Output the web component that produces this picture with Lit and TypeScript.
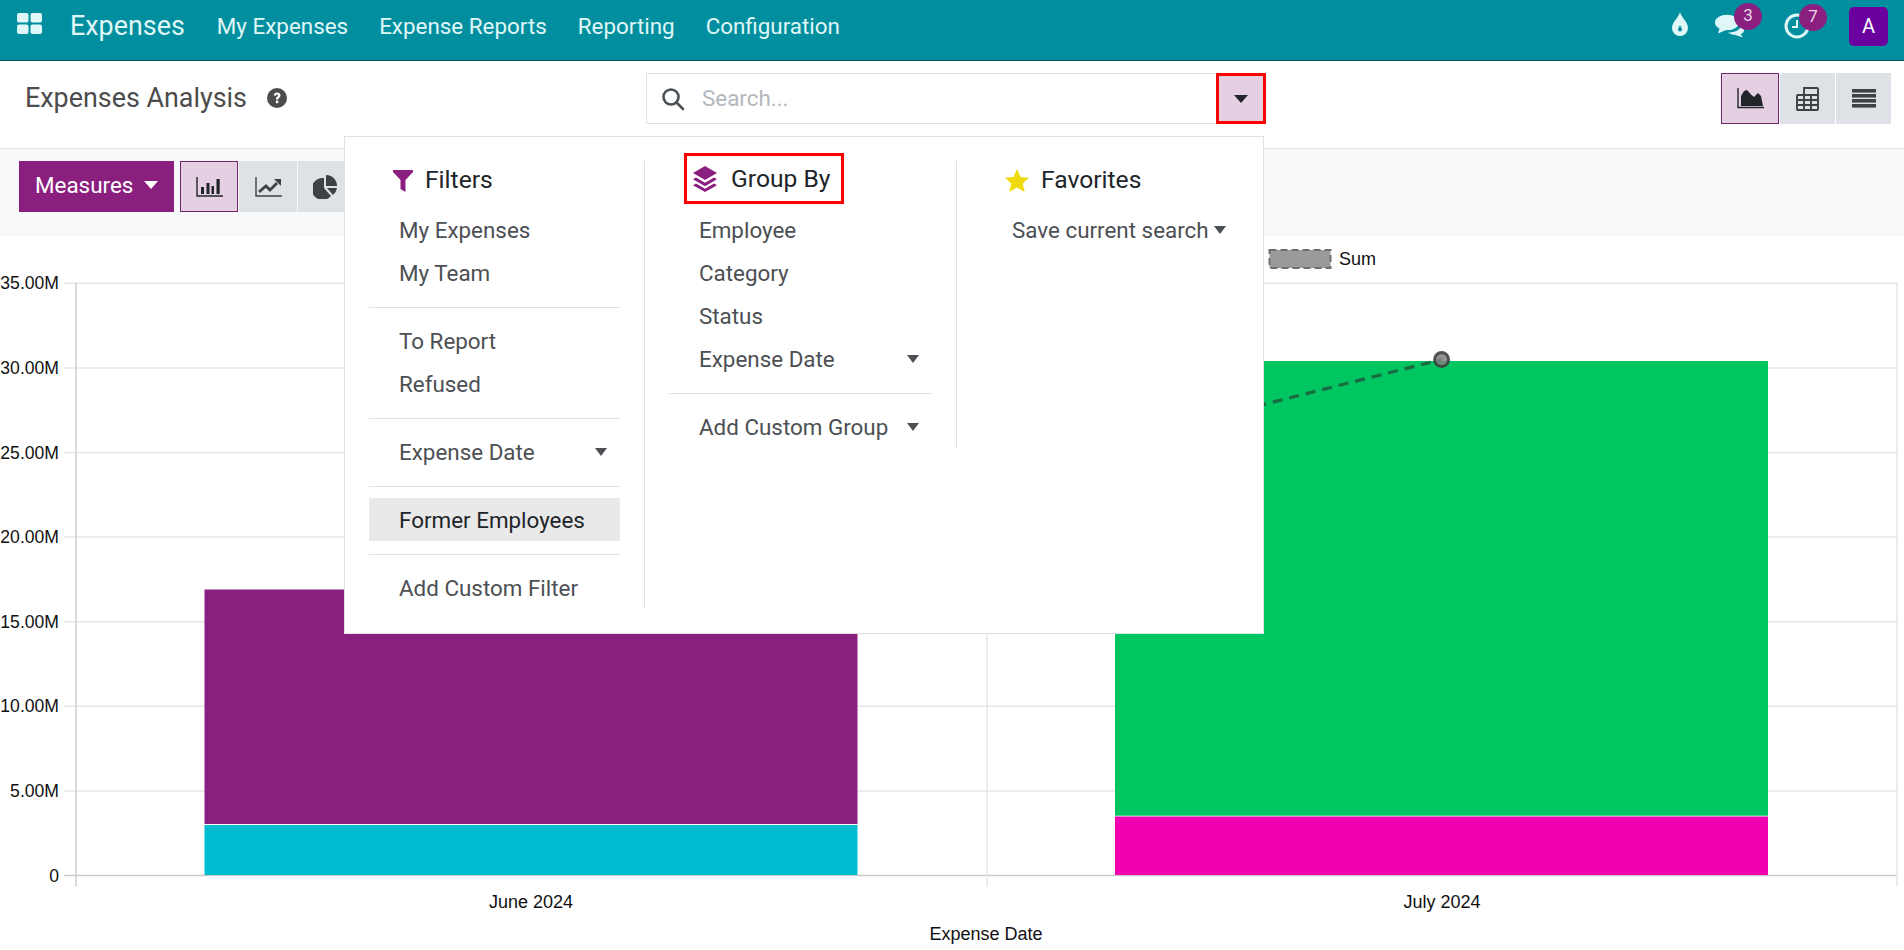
import { LitElement, html, css, svg } from "lit";
import { customElement } from "lit/decorators.js";

const caret = (cls = "") => html`<svg class="caret ${cls}" viewBox="0 0 12 7" preserveAspectRatio="none"><path d="M0 0h12L6 7z" fill="currentColor"/></svg>`;

@customElement("app-root")
export class AppRoot extends LitElement {
  static styles = css`
    :host { display: block; position: relative; width: 1904px; height: 950px; overflow: hidden; background: #fff;
      font-family: Roboto, "Noto Sans", sans-serif; color: #4c4c4c; display: flex; flex-direction: column; }
    .nav { flex: none; background: #018f9f; border-bottom: 1px solid #00525c; color: #e0f7f7;
      display: flex; align-items: center; font-size: 22.4px; padding-bottom: 8px; height: 52px; }
    .apps { width: 25px; height: 21px; margin: 0 0 5px 17px; flex: none; }
    .brand { font-size: 26.88px; margin-left: 28px; margin-right: 32px; }
    .menu { display: flex; gap: 31px; }
    .sys { margin-left: auto; display: flex; align-items: center; padding-right: 16px; position: relative; height: 100%; }
    .ico { flex: none; display: block; }
    .iw { position: relative; display: block; }
    .badge { position: absolute; width: 28px; height: 27px; border-radius: 50%; background: #8b1f80; color: #e9d8e8; font-size: 17px;
      display: flex; align-items: center; justify-content: center; padding-bottom: 3px; box-sizing: border-box; }
    .avatar { width: 39px; height: 39px; border-radius: 5px; background: #6a009e; color: #fff; font-size: 20px;
      display: flex; align-items: center; justify-content: center; margin-left: 39px; }
    .cp { flex: none; height: 88px; box-sizing: border-box; border-bottom: 1px solid #dee2e6; display: grid;
      grid-template-columns: 646px 620px 1fr; align-items: start; padding-top: 12px; }
    .title { font-size: 26.88px; height: 51px; padding: 0 0 2px 25px; box-sizing: border-box; color: #4c4c4c; display: flex; align-items: center; gap: 20px; }
    .search { display: flex; height: 51px; box-sizing: border-box; }
    .field { flex: 1; border: 1px solid #dee2e6; border-right: 0; display: flex; align-items: center; gap: 17px; padding-left: 14px;
      color: #b3b8bd; font-size: 22.4px; }
    .field span { padding-bottom: 2px; }
    .sbtn { width: 50px; border: 3px solid #f00; background: #e5d0e3; box-sizing: border-box; display: flex; align-items: center;
      justify-content: center; color: #212529; }
    .caret { width: 12px; height: 8px; flex: none; display: block; }
    .caret.big { width: 14px; height: 8px; }
    .views { display: flex; justify-content: flex-end; padding-right: 13px; gap: 1px; }
    .vb { width: 55px; height: 51px; box-sizing: border-box; background: #dee2e6; display: flex; align-items: center; justify-content: center; color: #3d4247; }
    .vb.on { width: 58px; background: #e5d0e3; border: 1px solid #74246c; color: #212529; }
    .vb.w { width: 58px; }
    .vb.pie { justify-content: flex-start; padding-left: 15px; }
    .tb { flex: none; height: 87px; background: #f8f9fa; display: flex; align-items: flex-start; padding: 12px 0 0 19px; gap: 1px; box-sizing: border-box; }
    .measures { width: 155px; height: 51px; background: #8b1f80; color: #fff; font-size: 22.4px; display: flex; align-items: center;
      padding: 0 0 3px 16px; box-sizing: border-box; gap: 11px; margin-right: 5px; }
    .chart { flex: none; display: block; }
    .chart text { font-family: "Liberation Sans", Arial, sans-serif; font-size: 18px; fill: #111; }
    .chart text.yl { font-size: 17.6px; }
    .dd { position: absolute; left: 344px; top: 136px; width: 920px; box-sizing: border-box; background: #fff; border: 1px solid #dee2e6;
      padding: 24px 0 24px; display: flex; align-items: flex-start; font-size: 22.4px; }
    .col { box-sizing: border-box; }
    .c1 { width: 300px; border-right: 1px solid #dee2e6; }
    .c2 { width: 312px; border-right: 1px solid #dee2e6; }
    .c3 { flex: 1; }
    .hd { height: 47px; display: flex; align-items: flex-start; padding-left: 48px; font-size: 24.64px; color: #212529; line-height: 38px; box-sizing: border-box; }
    .hd .ico { margin-top: 8px; }
    .hd.c1h .ico { margin-right: 12px; }
    .hd.c3h .ico { margin-right: 12px; }
    .gb { display: inline-flex; align-items: center; border: 3px solid #f00; gap: 14px; height: 51px; box-sizing: border-box; padding: 1px 11px 0 6px;
      margin: -8px 0 0 -9px; line-height: 44px; }
    .gb .ico { margin: 0; }
    .it { height: 43px; display: flex; align-items: center; padding: 0 13px 0 30px; justify-content: space-between; margin: 0 24px; white-space: nowrap; color: #4c4f53; }
    .it.hot { background: #e9e9e9; color: #212529; }
    .it.tight { justify-content: flex-start; gap: 5px; padding: 0 0 0 31px; margin-right: 0; }
    .sep { height: 1px; background: #dee2e6; margin: 13px 24px 11px; }
  `;

  private chart() {
    const h = 84.6, base = 875.5;
    const labels = ["0", "5.00M", "10.00M", "15.00M", "20.00M", "25.00M", "30.00M", "35.00M"];
    return svg`
      ${labels.map((l, i) => {
        const y = base - i * h;
        return svg`
          <line x1="64" x2="1897" y1=${y} y2=${y} stroke=${i === 0 ? "#c9c9c9" : "#e6e6e6"} stroke-width="1.5"/>
          <text class="yl" x="59" y=${y + 6} text-anchor="end">${l}</text>`;
      })}
      <line x1="76" x2="76" y1="282.5" y2="886.5" stroke="#cfcfcf" stroke-width="1.5"/>
      <line x1="987" x2="987" y1="282.5" y2="886.5" stroke="#e6e6e6" stroke-width="1.5"/>
      <line x1="1897" x2="1897" y1="282.5" y2="886.5" stroke="#e6e6e6" stroke-width="1.5"/>
      <rect x="204.5" y="589.5" width="653" height="234.5" fill="#8b1f80"/>
      <rect x="204.5" y="825" width="653" height="50" fill="#00bdd2"/>
      <rect x="1115" y="361" width="653" height="454.7" fill="#00c661"/>
      <rect x="1115" y="816.5" width="653" height="58.5" fill="#f100b1"/>
      <line x1="531" y1="589.5" x2="1441.6" y2="359.5" stroke="#1a6a42" stroke-width="3.2" stroke-dasharray="10 7"/>
      <circle cx="1441.6" cy="359.5" r="7" fill="#80807f" fill-opacity=".85" stroke="#3c3c3c" stroke-opacity=".85" stroke-width="3"/>
      <rect x="1269.5" y="250" width="61" height="18" fill="#9a9a9a" stroke="#6f6f6f" stroke-width="2" stroke-dasharray="7 4"/>
      <text x="1339" y="264.5">Sum</text>
      <text x="531" y="907.5" text-anchor="middle">June 2024</text>
      <text x="1442" y="907.5" text-anchor="middle">July 2024</text>
      <text x="986" y="939.5" text-anchor="middle">Expense Date</text>
    `;
  }

  render() {
    return html`
      <div class="nav">
        <svg class="apps ico" viewBox="0 0 25 21" fill="#e0f7f7">
          <rect x="0" y="0" width="11.5" height="9.5" rx="2"/><rect x="13.5" y="0" width="11.5" height="9.5" rx="2"/>
          <rect x="0" y="11.5" width="11.5" height="9.5" rx="2"/><rect x="13.5" y="11.5" width="11.5" height="9.5" rx="2"/>
        </svg>
        <span class="brand">Expenses</span>
        <div class="menu"><span>My Expenses</span><span>Expense Reports</span><span>Reporting</span><span>Configuration</span></div>
        <div class="sys">
          <svg class="ico" width="18" height="24" viewBox="0 0 18 24" style="margin:0 26px 4px 0">
            <path fill-rule="evenodd" fill="#e0f7f7" d="M9 0C10 5 17 10 17 16A8 8 0 0 1 1 16C1 10 8 5 9 0ZM9 13C8.4 15 7 16 7 17.6A2 2 0 0 0 11 17.6C11 16 9.6 15 9 13Z"/>
          </svg>
          <span class="iw" style="width:30px;height:24px;margin-right:39px">
            <svg class="ico" width="30" height="24" viewBox="0 0 30 24" fill="#e0f7f7">
              <ellipse cx="12" cy="8.5" rx="12" ry="7.8"/><path d="M5 13L3 19.5L11 16Z"/>
              <path d="M13 18.5C20 18.5 25 16 26 12C28.5 13.5 29 15 29 16.5C29 18 27.5 19.5 25.5 20L28 23.5L20.5 21C17.5 21 15 20 13 18.5Z"/>
            </svg>
            <span class="badge" style="left:19px;top:-11px">3</span>
          </span>
          <span class="iw" style="width:26px;height:26px">
            <svg class="ico" width="26" height="26" viewBox="0 0 26 26" fill="none" stroke="#e0f7f7" stroke-width="3">
              <circle cx="13" cy="13" r="11"/><path d="M13 7V14H8" stroke-width="2"/>
            </svg>
            <span class="badge" style="left:15px;top:-9px">7</span>
          </span>
          <span class="avatar">A</span>
        </div>
      </div>

      <div class="cp">
        <div class="title">Expenses Analysis
          <svg class="ico" width="20" height="20" viewBox="0 0 20 20">
            <circle cx="10" cy="10" r="10" fill="#4c4c4c"/>
            <path d="M6.8 7.6C6.9 5.6 8.3 4.6 10.2 4.6C12.1 4.6 13.5 5.7 13.5 7.4C13.5 9.6 11.2 9.6 11.2 11.4H8.9C8.9 8.8 11 8.6 11 7.5C11 6.9 10.6 6.6 10 6.6C9.4 6.6 9 7 8.9 7.8Z" fill="#fff"/>
            <rect x="8.9" y="12.6" width="2.4" height="2.6" fill="#fff"/>
          </svg>
        </div>
        <div class="search">
          <div class="field">
            <svg class="ico" width="24" height="24" viewBox="0 0 24 24" fill="none" stroke="#495057" stroke-width="2.6">
              <circle cx="10" cy="10" r="7.5"/><path d="M15.5 15.5L22 22" stroke-linecap="round"/>
            </svg>
            <span>Search...</span>
          </div>
          <div class="sbtn">${caret("big")}</div>
        </div>
        <div class="views">
          <div class="vb on">
            <svg class="ico" width="27" height="21" viewBox="0 0 27 21">
              <path d="M1 0V19.5H27" fill="none" stroke="currentColor" stroke-width="1.4"/>
              <path fill="currentColor" d="M4 18L4 8L7 3L10 2L14 6.5L17 9L21 5L24 8L26 18Z"/>
            </svg>
          </div>
          <div class="vb">
            <svg class="ico" width="23" height="24" viewBox="0 0 23 24" fill="none" stroke="currentColor" stroke-width="1.9">
              <path d="M8 1H21Q22 1 22 2V22Q22 23 21 23H2Q1 23 1 22V9Q1 8 2 8H8ZM8 1V23M15 8V23M1 8H22M1 13H22M1 18H22"/>
            </svg>
          </div>
          <div class="vb">
            <svg class="ico" width="24" height="19" viewBox="0 0 24 19" fill="currentColor">
              <rect width="24" height="3.6"/><rect y="5" width="24" height="3.6"/><rect y="10" width="24" height="3.6"/><rect y="15" width="24" height="3.6"/>
            </svg>
          </div>
        </div>
      </div>

      <div class="tb">
        <div class="measures">Measures ${caret("big")}</div>
        <div class="vb on">
          <svg class="ico" width="27" height="20" viewBox="0 0 27 20">
            <path d="M1 0V19H27" fill="none" stroke="currentColor" stroke-width="1.4"/>
            <path fill="currentColor" d="M5 10h3v7H5zM10.5 6h3v11h-3zM15.5 9h2.5v8h-2.5zM20.5 2h3.2v15h-3.2z"/>
          </svg>
        </div>
        <div class="vb w">
          <svg class="ico" width="27" height="20" viewBox="0 0 27 20">
            <path d="M1 0V19H27" fill="none" stroke="currentColor" stroke-width="1.4"/>
            <path d="M4 15L11 9L15 13L22 6" fill="none" stroke="currentColor" stroke-width="2.8"/><path d="M19 2H26V9Z" fill="currentColor"/>
          </svg>
        </div>
        <div class="vb w pie">
          <svg class="ico" width="24" height="24" viewBox="0 0 24 24" fill="currentColor">
            <path d="M11 3V13L18 21A11 11 0 1 1 11 3Z"/><path d="M13 0A11 11 0 0 1 24 11H13Z"/><path d="M14 13H24A11 11 0 0 1 20 20Z"/>
          </svg>
        </div>
      </div>

      <svg class="chart" viewBox="0 236 1904 714" width="1904" height="714">${this.chart()}</svg>

      <div class="dd">
        <div class="col c1">
          <div class="hd c1h">
            <svg class="ico" width="20" height="24" viewBox="0 0 20 24" fill="#8b1f80"><path d="M0 1H20V3L12.5 11V23L7.5 20V11L0 3Z"/></svg>
            <span>Filters</span>
          </div>
          <div class="it">My Expenses</div>
          <div class="it">My Team</div>
          <div class="sep"></div>
          <div class="it">To Report</div>
          <div class="it">Refused</div>
          <div class="sep"></div>
          <div class="it">Expense Date ${caret()}</div>
          <div class="sep"></div>
          <div class="it hot">Former Employees</div>
          <div class="sep"></div>
          <div class="it">Add Custom Filter</div>
        </div>
        <div class="col c2">
          <div class="hd">
            <span class="gb">
              <svg class="ico" width="24" height="26" viewBox="0 0 24 26" fill="#8b1f80">
                <path d="M12 0L24 7L12 14L0 7Z"/><path d="M3 11.5L12 16.7L21 11.5L24 13.3L12 20.2L0 13.3Z"/><path d="M3 17.5L12 22.7L21 17.5L24 19.3L12 26L0 19.3Z"/>
              </svg>
              <span>Group By</span>
            </span>
          </div>
          <div class="it">Employee</div>
          <div class="it">Category</div>
          <div class="it">Status</div>
          <div class="it">Expense Date ${caret()}</div>
          <div class="sep"></div>
          <div class="it">Add Custom Group ${caret()}</div>
        </div>
        <div class="col c3">
          <div class="hd c3h">
            <svg class="ico" width="24" height="23" viewBox="0 0 24 23" fill="#f0d90c"><path d="M12 0L15.6 8L24 8.8L17.8 14.6L19.6 23L12 18.6L4.4 23L6.2 14.6L0 8.8L8.4 8Z"/></svg>
            <span>Favorites</span>
          </div>
          <div class="it tight">Save current search ${caret()}</div>
        </div>
      </div>
    `;
  }
}
